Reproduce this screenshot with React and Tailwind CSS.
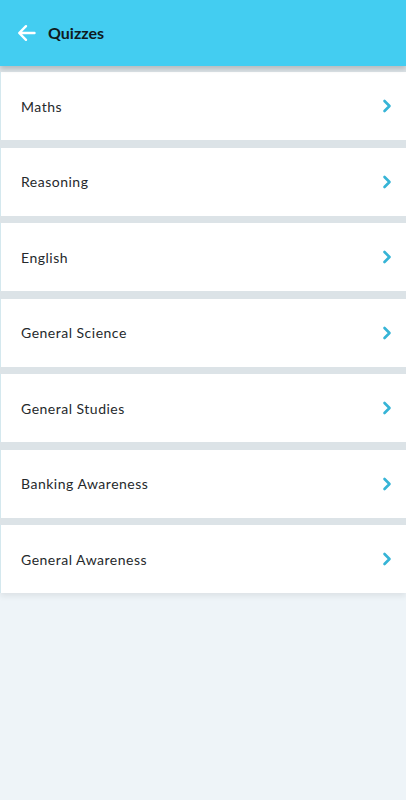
const subjects = [
  "Maths",
  "Reasoning",
  "English",
  "General Science",
  "General Studies",
  "Banking Awareness",
  "General Awareness",
];

function Chevron() {
  return (
    <svg width="10" height="14" viewBox="0 0 10 14" fill="none">
      <path
        d="M2.5 2 L7.5 7 L2.5 12"
        stroke="#36b4d6"
        strokeWidth="2.6"
        strokeLinecap="round"
        strokeLinejoin="round"
      />
    </svg>
  );
}

export default function App() {
  return (
    <div
      className="w-[406px] h-[800px] bg-[#eef4f8] flex flex-col overflow-hidden"
      style={{ fontFamily: "Lato, 'Noto Sans', sans-serif" }}
    >
      <div className="h-[66px] bg-[#43cdf1] flex items-center pl-[17px] gap-[12px] relative z-10 shadow-[0_3px_5px_rgba(0,0,0,0.18)]">
        <svg width="19" height="18" viewBox="0 0 19 18" fill="none">
          <path
            d="M17.5 9 H2.5 M9 2.2 L2.2 9 L9 15.8"
            stroke="white"
            strokeWidth="2.4"
            strokeLinecap="round"
            strokeLinejoin="round"
          />
        </svg>
        <span className="text-[16px] font-bold text-[#0f1a20]">Quizzes</span>
      </div>

      <div className="bg-[#dce3e7] pt-[6px] flex flex-col gap-[7.5px] shadow-[0_3px_6px_rgba(0,0,0,0.08)]">
        {subjects.map((s) => (
          <div
            key={s}
            className="h-[68px] bg-white border-l border-[#d4e8ee] flex items-center justify-between pl-[20px] pr-[14px]"
          >
            <span className="text-[14px] text-[#25292c] tracking-[0.5px]">
              {s}
            </span>
            <Chevron />
          </div>
        ))}
      </div>
    </div>
  );
}
